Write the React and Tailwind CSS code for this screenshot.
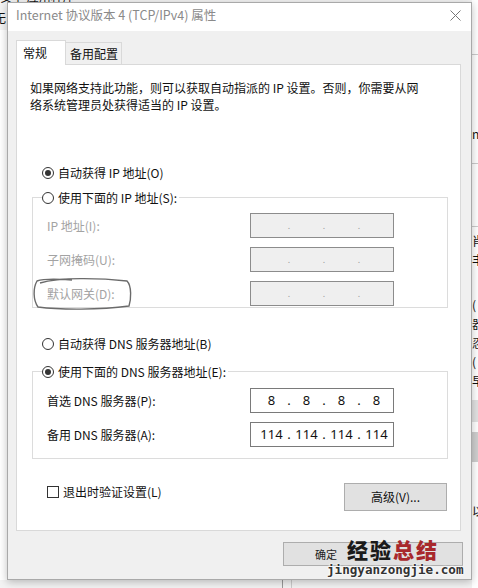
import React from 'react';

const font = { fontFamily: "'Noto Sans CJK SC', 'Noto Sans', sans-serif" };

function Radio({ checked, label, dim }) {
  return (
    <div className="flex h-[17px] items-center">
      <span className="flex h-[12px] w-[12px] items-center justify-center rounded-full border border-[#333] bg-white">
        {checked && <span className="h-[6px] w-[6px] rounded-full bg-[#333]" />}
      </span>
      <span className={`ml-[4px] text-[12px] leading-[17px] ${dim ? 'text-[#a0a0a0]' : 'text-[#111]'}`}>{label}</span>
    </div>
  );
}

function IpBox({ parts, disabled }) {
  return (
    <div
      className={`flex h-[25px] w-[144px] items-center border pl-[4px] text-[13px] ${
        disabled ? 'border-[#8c8c8c] bg-[#efefef] text-[#888]' : 'border-[#7a7a7a] bg-white text-[#111]'
      }`}
      style={{ fontFamily: "'Noto Sans', sans-serif" }}
    >
      {[0, 1, 2, 3].map((i) => (
        <React.Fragment key={i}>
          <span className="w-[33px] text-center">{parts ? parts[i] : ''}</span>
          {i < 3 && (
            <span className={`flex w-[2px] justify-center ${disabled ? 'text-[9px] text-[#999]' : ''}`}>.</span>
          )}
        </React.Fragment>
      ))}
    </div>
  );
}

function Row({ label, dim, parts, disabled }) {
  return (
    <div className="flex h-[25px] items-center">
      <div className={`w-[217px] pl-[14px] text-[12px] ${dim ? 'text-[#a3a3a3]' : 'text-[#111]'}`}>{label}</div>
      <IpBox parts={parts} disabled={disabled} />
    </div>
  );
}

export default function App() {
  return (
    <div className="relative h-[588px] w-[478px] overflow-hidden bg-[#f3f3f3]" style={font}>
      {/* window behind */}
      <div className="absolute left-0 top-[-12px] text-[12px] text-[#111]">安全 应用程序</div>
      <div className="absolute left-[-6px] top-[9px] text-[12px] text-[#111]">无</div>
      <div className="absolute left-[0px] top-[30px] h-[550px] w-[7px] bg-white" />
      <div className="absolute left-[472px] top-0 h-[588px] w-[6px] bg-white">
        <div className="mt-[54px] h-px bg-[#ccc]" />
        <div className="mt-[70px] text-[12px] text-[#111]">n</div>
        <div className="mt-[20px] h-px bg-[#ccc]" />
        <div className="mt-[62px] h-px bg-[#ccc]" />
        <div className="mt-[4px] text-[12px] leading-[19px] text-[#111]">肖<br />丰</div>
        <div className="mt-[26px] text-[12px] leading-[19px] text-[#111]">(<br />器<br />忍<br />(<br />早</div>
        <div className="mt-[10px] h-[22px] bg-[#e2e2e2]" />
        <div className="mt-[10px] h-[30px] bg-[#cfcfcf]" />
        <div className="mt-[40px] text-[12px] text-[#111]">以</div>
      </div>
      <div className="absolute left-[282px] top-[580px] h-[8px] w-px bg-[#999]" />
      <div className="absolute left-[291px] top-[580px] h-[8px] w-px bg-[#ccc]" />

      {/* dialog */}
      <div className="relative ml-[7px] mt-[2px] flex h-[578px] w-[465px] flex-col border border-[#a9a9a9] bg-[#f0f0f0] shadow-[0_2px_8px_rgba(0,0,0,0.25)]">
        <div className="flex h-[28px] items-start justify-between bg-white pl-[8px] pr-[10px]">
          <span className="mt-[4px] text-[12.5px] leading-[16px] text-[#8a8a8a]">Internet 协议版本 4 (TCP/IPv4) 属性</span>
          <svg className="mt-[7px]" width="11" height="11" viewBox="0 0 11 11">
            <path d="M0.5 0.5 L10.5 10.5 M10.5 0.5 L0.5 10.5" stroke="#777" strokeWidth="1" fill="none" />
          </svg>
        </div>

        <div className="flex flex-1 flex-col pl-[8px] pt-[9px]">
          <div className="flex h-[24px] items-end">
            <div className="relative z-10 -mb-px flex h-[25px] w-[50px] items-start border border-b-0 border-[#d9d9d9] bg-white pl-[6px] pt-[4px] text-[12px] leading-[16px] text-[#111]">
              常规
            </div>
            <div className="flex h-[22px] w-[56px] items-start border border-b-0 border-l-0 border-[#d9d9d9] bg-[#f0f0f0] pl-[4px] pt-[3px] text-[12px] leading-[16px] text-[#111]">
              备用配置
            </div>
          </div>

          <div className="h-[467px] w-[445px] border border-[#d9d9d9] bg-white">
            <div className="pl-[13px] pt-[14px] text-[12px] leading-[17px] text-[#111]">
              如果网络支持此功能，则可以获取自动指派的 IP 设置。否则，你需要从网
              <br />
              络系统管理员处获得适当的 IP 设置。
            </div>

            <div className="ml-[25px] mt-[51px]">
              <Radio checked label="自动获得 IP 地址(O)" />
            </div>

            <div className="ml-[15px] mt-[16px] w-[416px] border border-[#dcdcdc] pb-[1px]">
              <div className="-mt-[9px] ml-[9px] w-fit bg-white pr-[2px]">
                <Radio label="使用下面的 IP 地址(S):" />
              </div>
              <div className="mt-[7px] flex flex-col gap-[9px]">
                <Row label="IP 地址(I):" dim disabled />
                <Row label="子网掩码(U):" dim disabled />
                <Row label="默认网关(D):" dim disabled />
              </div>
            </div>

            <div className="ml-[25px] mt-[27px]">
              <Radio label="自动获得 DNS 服务器地址(B)" />
            </div>

            <div className="ml-[15px] mt-[19px] w-[416px] border border-[#dcdcdc] pb-[11px]">
              <div className="-mt-[9px] ml-[9px] w-fit bg-white pr-[2px]">
                <Radio checked label="使用下面的 DNS 服务器地址(E):" />
              </div>
              <div className="mt-[8px] flex flex-col gap-[9px]">
                <Row label="首选 DNS 服务器(P):" parts={['8', '8', '8', '8']} />
                <Row label="备用 DNS 服务器(A):" parts={['114', '114', '114', '114']} />
              </div>
            </div>

            <div className="mt-[24px] flex items-start justify-between pl-[30px] pr-[13px]">
              <div className="flex h-[17px] items-center">
                <span className="h-[12px] w-[12px] border border-[#333] bg-white" />
                <span className="ml-[4px] text-[12px] text-[#111]">退出时验证设置(L)</span>
              </div>
              <div className="flex h-[28px] w-[103px] items-center justify-center border border-[#adadad] bg-[#e1e1e1] text-[12px] text-[#111]">
                高级(V)...
              </div>
            </div>
          </div>

          <div className="mt-[11px] flex justify-end pr-[8px]">
            <div className="flex h-[24px] w-[180px] items-center border border-[#adadad] bg-[#e1e1e1] pl-[31px] text-[11px] text-[#222]">
              确定
            </div>
          </div>
        </div>
      </div>

      {/* hand drawn mark */}
      <svg className="pointer-events-none absolute left-0 top-0" width="478" height="588">
        <path
          d="M40 283 C60 277 100 278 127 281 C132 286 131 300 129 306 C100 310 60 310 38 307 C33 300 33 288 37 281 C45 278 60 279 72 280"
          stroke="#6b6b6b"
          strokeWidth="1.4"
          fill="none"
        />
      </svg>

      {/* watermark */}
      <div className="pointer-events-none absolute left-[347px] top-[538px] text-[21px] font-black leading-[22px] tracking-[2px]">
        <span className="text-[#1a1a1a]">经验</span>
        <span className="text-[#a8282c]">总结</span>
      </div>
      <div
        className="pointer-events-none absolute left-[327px] top-[562px] text-[12.6px] font-bold leading-[16px] text-[#333]"
        style={{
          fontFamily: "'DejaVu Sans Mono', monospace",
          textShadow: '0 0 2px #fff, 0 0 2px #fff, 0 0 3px #fff',
        }}
      >
        jingyanzongjie.com
      </div>
    </div>
  );
}
